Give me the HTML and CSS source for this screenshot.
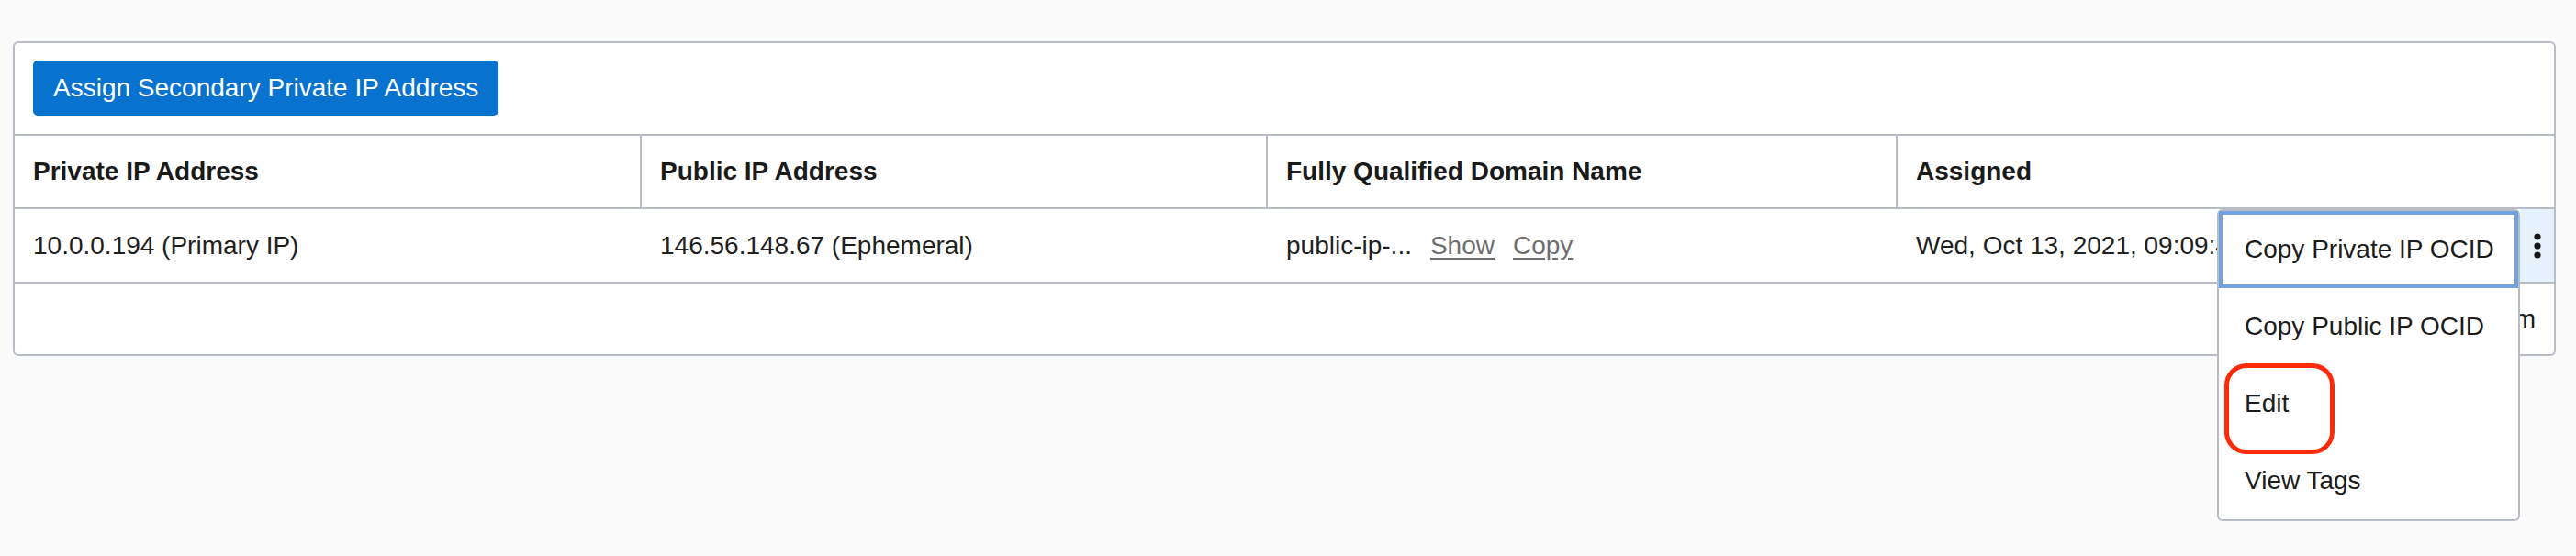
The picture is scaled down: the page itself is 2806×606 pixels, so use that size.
FILE: index.html
```html
<!DOCTYPE html>
<html lang="en">
<head>
<meta charset="utf-8">
<title>Private IP Addresses</title>
<link rel="stylesheet" href="styles.css">
</head>
<body>
<div class="card">
  <div class="toolbar">
    <button class="btn">Assign Secondary Private IP Address</button>
  </div>
  <div class="table">
    <div class="row head">
      <div class="cell">Private IP Address</div>
      <div class="cell">Public IP Address</div>
      <div class="cell">Fully Qualified Domain Name</div>
      <div class="cell last">Assigned</div>
      <div class="cell act"></div>
    </div>
    <div class="row data">
      <div class="cell">10.0.0.194 (Primary IP)</div>
      <div class="cell">146.56.148.67 (Ephemeral)</div>
      <div class="cell fqdn"><span>public-ip-...</span><a class="lnk">Show</a><a class="lnk">Copy</a></div>
      <div class="cell">Wed, Oct 13, 2021, 09:09:45 UTC</div>
      <div class="cell act hover">
        <svg class="kebab" width="8" height="28" viewBox="0 0 8 28"><circle cx="4" cy="4" r="3.6"/><circle cx="4" cy="14" r="3.6"/><circle cx="4" cy="24" r="3.6"/></svg>
        <div class="menu">
          <div class="item focus">Copy Private IP OCID</div>
          <div class="item">Copy Public IP OCID</div>
          <div class="item">Edit</div>
          <div class="item">View Tags</div>
          <div class="mark"></div>
        </div>
      </div>
    </div>
  </div>
  <div class="footer">Showing 1 Item</div>
</div>
</body>
</html>
```

FILE: styles.css
```css
* { box-sizing: border-box; }
html, body { margin: 0; padding: 0; }
body {
  background: #fafafa;
  font-family: "Liberation Sans", Arial, sans-serif;
  font-size: 28px;
  color: #1c1c1c;
  width: 2806px;
  height: 606px;
  overflow: hidden;
}
.card {
  margin: 45px 22px 0 14px;
  background: #fff;
  border: 2px solid #b8bcc4;
  border-radius: 6px;
}
.toolbar {
  padding: 19px 20px 20px 20px;
}
.btn {
  display: block;
  height: 60px;
  padding: 0 22px;
  border: 0;
  border-radius: 5px;
  background: #0872cf;
  color: #fff;
  font-family: "Liberation Sans", Arial, sans-serif;
  font-size: 28px;
  line-height: 60px;
}
.table {
  border-top: 2px solid #b8bcc4;
}
.row {
  display: grid;
  grid-template-columns: 683px 682px 686px 678px 1fr;
  border-bottom: 2px solid #b8bcc4;
}
.cell {
  display: flex;
  align-items: center;
  padding-left: 20px;
  white-space: nowrap;
}
.head .cell {
  height: 78px;
  font-weight: bold;
  color: #1a1a1a;
  border-right: 2px solid #b8bcc4;
}
.head .cell.last,
.head .cell.act { border-right: 0; }
.data .cell {
  height: 79px;
  color: #1f1f1f;
}
.fqdn { gap: 20px; }
.lnk {
  color: #6e6e6e;
  text-decoration: underline;
  text-underline-offset: 4px;
}
.cell.act {
  padding-left: 0;
  justify-content: center;
  position: relative;
}
.data .cell.act.hover { background: #e5f1fb; }
.kebab { fill: #161513; }
.menu {
  position: absolute;
  top: 0;
  right: 100%;
  width: 330px;
  background: #fff;
  border: 2px solid #b8bcc4;
  border-radius: 6px;
  z-index: 2;
}
.item {
  height: 84px;
  display: flex;
  align-items: center;
  padding-left: 28px;
  color: #1c1c1c;
  font-size: 28px;
}
.item.focus {
  box-shadow: inset 0 0 0 4px #72a3df;
}
.mark {
  position: absolute;
  left: 6px;
  top: 166px;
  width: 120px;
  height: 99px;
  border: 5px solid #ff2a0a;
  border-radius: 24px;
}
.footer {
  height: 77px;
  line-height: 77px;
  text-align: right;
  padding-right: 20px;
  color: #1c1c1c;
}
```
